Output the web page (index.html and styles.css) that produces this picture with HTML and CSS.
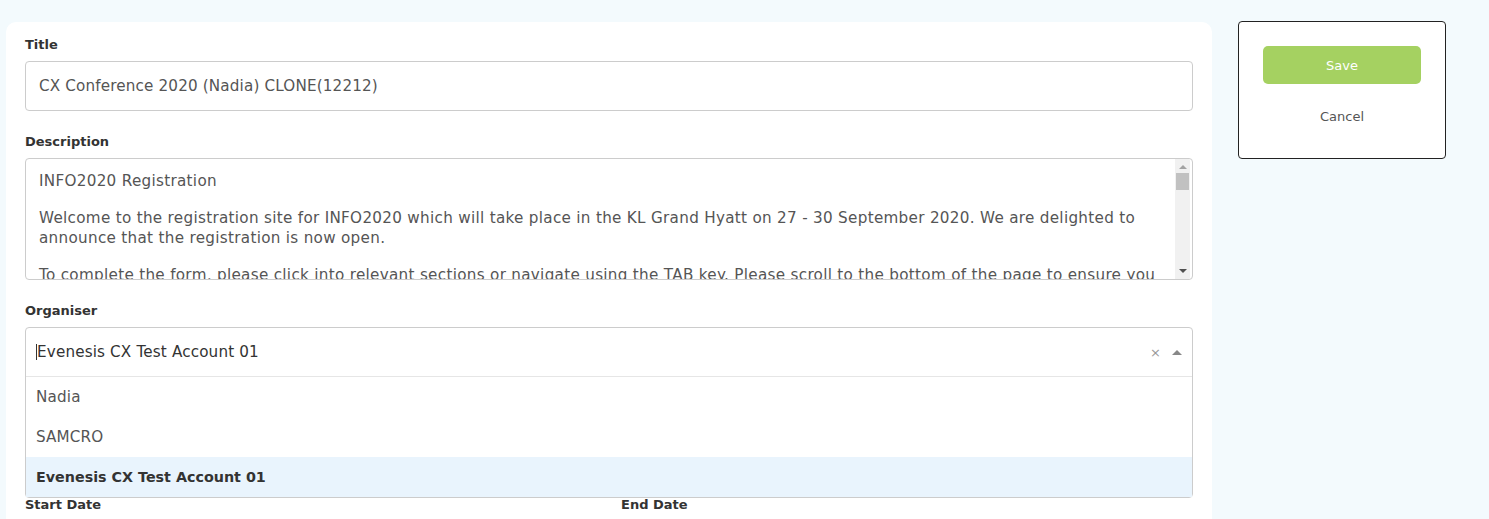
FILE: index.html
```html
<!DOCTYPE html>
<html lang="en">
<head>
<meta charset="utf-8">
<title>Edit Event</title>
<link rel="stylesheet" href="styles.css">
</head>
<body>
<div class="page">
  <main class="card">
    <div class="field">
      <label class="label">Title</label>
      <div class="input">CX Conference 2020 (Nadia) CLONE(12212)</div>
    </div>
    <div class="field">
      <label class="label">Description</label>
      <div class="textarea">
        <div class="ta-text">
          <p>INFO2020 Registration</p>
          <p class="gap">Welcome to the registration site for INFO2020 which will take place in the KL Grand Hyatt on 27 - 30 September 2020. We are delighted to</p>
          <p>announce that the registration is now open.</p>
          <p class="gap">To complete the form, please click into relevant sections or navigate using the TAB key. Please scroll to the bottom of the page to ensure you</p>
        </div>
        <div class="scrollbar">
          <span class="sb-up"></span>
          <span class="sb-thumb"></span>
          <span class="sb-down"></span>
        </div>
      </div>
    </div>
    <div class="field">
      <label class="label">Organiser</label>
      <div class="select">
        <div class="select-head">
          <span class="caret"></span><span class="sel-text">Evenesis CX Test Account 01</span>
          <span class="clear">×</span>
          <span class="arrow"></span>
        </div>
        <ul class="options">
          <li>Nadia</li>
          <li>SAMCRO</li>
          <li class="active">Evenesis CX Test Account 01</li>
        </ul>
      </div>
    </div>
    <div class="dates">
      <label class="label">Start Date</label>
      <label class="label">End Date</label>
    </div>
  </main>
  <aside class="actions">
    <button class="save">Save</button>
    <button class="cancel">Cancel</button>
  </aside>
</div>
</body>
</html>
```
FILE: styles.css
```css
html, body {
  margin: 0;
  padding: 0;
  background: #f3fafd;
  height: 519px;
  overflow: hidden;
}
body {
  font-family: "DejaVu Sans", "Open Sans", sans-serif;
  color: #555;
}
.page {
  display: flex;
  align-items: flex-start;
  padding: 22px 0 0 6px;
  gap: 26px;
}
.card {
  width: 1206px;
  background: #fff;
  border-radius: 10px;
  padding: 15px 19px 20px 19px;
  box-sizing: border-box;
  height: 520px;
}
.label {
  display: block;
  font-size: 13px;
  font-weight: bold;
  color: #333;
  line-height: 16px;
  margin-bottom: 8px;
}
.field { margin-bottom: 23px; }
.input {
  height: 50px;
  box-sizing: border-box;
  border: 1px solid #ccc;
  border-radius: 4px;
  padding: 0 13px;
  line-height: 48px;
  font-size: 15.2px;
  letter-spacing: 0.15px;
  color: #555;
}
.textarea {
  height: 122px;
  box-sizing: border-box;
  border: 1px solid #ccc;
  border-radius: 4px;
  display: flex;
  overflow: hidden;
}
.ta-text {
  flex: 1;
  padding: 12px 13px 0;
  font-size: 15.2px;
  letter-spacing: 0.3px;
  line-height: 20px;
  color: #555;
  overflow: hidden;
}
.ta-text p {
  margin: 0;
  white-space: nowrap;
}
.ta-text p.gap { margin-top: 17px; }
.scrollbar {
  width: 15px;
  margin-right: 2px;
  background: #f1f1f1;
  display: flex;
  flex-direction: column;
  align-items: center;
}
.sb-up {
  margin-top: 6px;
  width: 0; height: 0;
  border-left: 4px solid transparent;
  border-right: 4px solid transparent;
  border-bottom: 4px solid #a3a3a3;
}
.sb-thumb {
  margin-top: 4px;
  width: 13px;
  height: 17px;
  background: #c1c1c1;
}
.sb-down {
  margin-top: auto;
  margin-bottom: 6px;
  width: 0; height: 0;
  border-left: 4px solid transparent;
  border-right: 4px solid transparent;
  border-top: 4px solid #505050;
}
.select {
  border: 1px solid #ccc;
  border-radius: 4px;
  box-sizing: border-box;
}
.select-head {
  height: 48px;
  display: flex;
  align-items: center;
  padding: 0 10px;
  font-size: 15.2px;
  letter-spacing: 0.15px;
  color: #333;
  border-bottom: 1px solid #e6e6e6;
}
.caret {
  width: 1px;
  height: 16px;
  background: #333;
}
.sel-text { flex: 1; }
.clear {
  color: #999;
  font-size: 13px;
  margin-right: 11px;
}
.arrow {
  width: 0; height: 0;
  border-left: 5px solid transparent;
  border-right: 5px solid transparent;
  border-bottom: 5px solid #888;
}
.options {
  list-style: none;
  margin: 0;
  padding: 0;
}
.options li {
  height: 40px;
  line-height: 40px;
  padding: 0 10px;
  font-size: 15.2px;
  letter-spacing: 0.15px;
  color: #555;
}
.options li.active {
  background: #e9f4fd;
  color: #333;
  font-weight: bold;
  font-size: 14.3px;
  letter-spacing: 0;
}
.dates {
  margin-top: -24px;
  display: grid;
  grid-template-columns: 596px 1fr;
}
.actions {
  width: 208px;
  height: 138px;
  box-sizing: border-box;
  margin-top: -1px;
  background: #fff;
  border: 1px solid #222;
  border-radius: 4px;
  display: flex;
  flex-direction: column;
  align-items: center;
  padding-top: 24px;
}
.save {
  width: 158px;
  height: 38px;
  border: 0;
  border-radius: 5px;
  background: #a5d161;
  color: #fff;
  font-family: inherit;
  font-size: 13px;
}
.cancel {
  margin-top: 25px;
  padding: 0;
  border: 0;
  background: none;
  color: #555;
  font-family: inherit;
  font-size: 13px;
}
```
